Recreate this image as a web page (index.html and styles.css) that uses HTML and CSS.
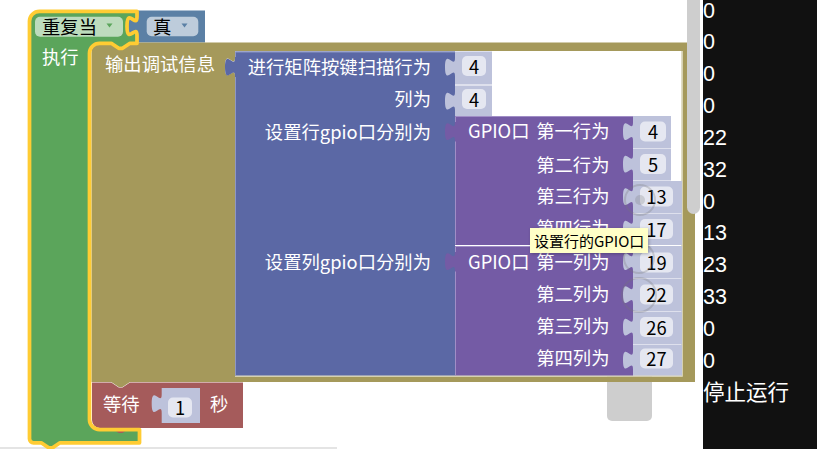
FILE: index.html
```html
<!DOCTYPE html>
<html lang="zh-CN">
<head>
<meta charset="utf-8">
<title>Blockly</title>
<link rel="stylesheet" href="styles.css">
</head>
<body>
<div class="screen">
  <div class="workspace">
    <div class="trash"></div>
    <svg class="blocks" width="703" height="449" viewBox="0 0 703 449">
      <!-- loop block (green) -->
      <path class="c-green" d="M29.5,21.3 A10,10 0 0 1 39.5,11.3 H137 V16.75 c0,12.5 -10,-10 -10,9.375 s10,-3.125 10,9.375 V43.3 H130 l-7.5,5 -3.75,0 -7.5,-5 H99.5 A10,10 0 0 0 89.5,53.3 V419.5 A10,10 0 0 0 99.5,429.5 H139.5 V442.8 H60 l-7.5,5 -3.75,0 -7.5,-5 H33.5 A4,4 0 0 1 29.5,438.8 Z"/>
      <rect class="dd-green" x="35" y="16.7" width="88" height="20" rx="5"/>
      <text class="lbl dark" x="42" y="26">重复当</text>
      <polygon class="arr-green" points="106.5,23.5 112.5,23.5 109.5,27.5"/>
      <text class="lbl" x="42" y="55.5">执行</text>

      <!-- boolean block -->
      <path class="c-bool" d="M137,10.5 H205 V42.5 H137 V35.5 c0,-12.5 -10,10 -10,-9.375 s10,3.125 10,-9.375 Z"/>
      <rect class="dd-bool" x="146.7" y="16.7" width="51.6" height="19.5" rx="5"/>
      <text class="lbl dark" x="153" y="26">真</text>
      <polygon class="arr-bool" points="181.5,23.5 187.5,23.5 184.5,27.5"/>

      <!-- print block (olive) with inline hole -->
      <path class="c-olive" fill-rule="evenodd" d="M91.5,52.5 A10,10 0 0 1 101.5,42.5 H111.25 l7.5,5 3.75,0 7.5,-5 H695 V382 H130 l-7.5,5 -3.75,0 -7.5,-5 H91.5 Z M235,51 H682.5 V376.5 H235 V76.25 c0,-12.5 -10,10 -10,-9.375 s10,3.125 10,-9.375 Z"/>
      <path class="hole-light" d="M235,376 H682 V51"/>
      <text class="lbl" x="105" y="63">输出调试信息</text>

      <!-- matrix keypad block (blue) -->
      <path class="c-blue" d="M235,51.5 H455 V375.5 H235 V76.5 c0,-12.5 -10,10 -10,-9.375 s10,3.125 10,-9.375 Z"/>
      <path class="hl-blue" d="M235.5,375 V77 M235.5,57 V52 H455"/>
      <text class="lbl end" x="431" y="66">进行矩阵按键扫描行为</text>
      <text class="lbl end" x="431" y="98">列为</text>
      <text class="lbl end" x="431" y="131">设置行gpio口分别为</text>
      <text class="lbl end" x="431" y="261">设置列gpio口分别为</text>

      <!-- number 4 / 4 -->
      <path class="c-num" d="M455,51.5 H492 V84.5 H455 V76.5 c0,-12.5 -10,10 -10,-9.375 s10,3.125 10,-9.375 Z"/>
      <rect class="fld" x="462" y="56" width="24" height="20" rx="5"/>
      <text class="lbl dark mid" x="474" y="65.5">4</text>
      <path class="c-num" d="M455,85.5 H492 V116 H455 V110.5 c0,-12.5 -10,10 -10,-9.375 s10,3.125 10,-9.375 Z"/>
      <rect class="fld" x="462" y="89" width="24" height="20" rx="5"/>
      <text class="lbl dark mid" x="474" y="98.5">4</text>

      <!-- GPIO row block (purple) -->
      <path class="c-purple" d="M455,116 H633 V245 H455 V141 c0,-12.5 -10,10 -10,-9.375 s10,3.125 10,-9.375 Z"/>
      <path class="hl-purple" d="M455.5,244.5 V141.5 M455.5,122 V116.5 H633"/>
      <text class="lbl" x="468" y="130">GPIO口</text>
      <text class="lbl end" x="609.5" y="130">第一行为</text>
      <text class="lbl end" x="609.5" y="164">第二行为</text>
      <text class="lbl end" x="609.5" y="195">第三行为</text>
      <text class="lbl end" x="609.5" y="227">第四行为</text>

      <path class="c-num" d="M633,116 H671 V148 H633 V141 c0,-12.5 -10,10 -10,-9.375 s10,3.125 10,-9.375 Z"/>
      <rect class="fld" x="640" y="121.5" width="26" height="20" rx="5"/>
      <text class="lbl dark mid" x="653" y="131">4</text>
      <path class="c-num" d="M633,148.5 H671 V180.5 H633 V173.5 c0,-12.5 -10,10 -10,-9.375 s10,3.125 10,-9.375 Z"/>
      <rect class="fld" x="640" y="154" width="26" height="20" rx="5"/>
      <text class="lbl dark mid" x="653" y="163.5">5</text>
      <path class="c-num" d="M633,181 H682 V213 H633 V206 c0,-12.5 -10,10 -10,-9.375 s10,3.125 10,-9.375 Z"/>
      <rect class="fld" x="640" y="186.5" width="33" height="20" rx="5"/>
      <text class="lbl dark mid" x="656.5" y="196">13</text>
      <path class="c-num" d="M633,213.5 H682 V245 H633 V238.5 c0,-12.5 -10,10 -10,-9.375 s10,3.125 10,-9.375 Z"/>
      <rect class="fld" x="640" y="219" width="33" height="20" rx="5"/>
      <text class="lbl dark mid" x="656.5" y="228.5">17</text>

      <!-- GPIO column block (purple) -->
      <path class="c-purple" d="M455,246 H633 V375.5 H455 V271 c0,-12.5 -10,10 -10,-9.375 s10,3.125 10,-9.375 Z"/>
      <path class="hl-purple" d="M455.5,375 V271.5 M455.5,252 V246.5 H633"/>
      <text class="lbl" x="468" y="260.5">GPIO口</text>
      <text class="lbl end" x="609.5" y="260.5">第一列为</text>
      <text class="lbl end" x="609.5" y="293">第二列为</text>
      <text class="lbl end" x="609.5" y="325">第三列为</text>
      <text class="lbl end" x="609.5" y="356.5">第四列为</text>

      <path class="c-num" d="M633,246 H682 V278.5 H633 V271 c0,-12.5 -10,10 -10,-9.375 s10,3.125 10,-9.375 Z"/>
      <rect class="fld" x="640" y="252.5" width="33" height="20" rx="5"/>
      <text class="lbl dark mid" x="656.5" y="262">19</text>
      <path class="c-num" d="M633,279 H682 V311 H633 V304 c0,-12.5 -10,10 -10,-9.375 s10,3.125 10,-9.375 Z"/>
      <rect class="fld" x="640" y="284.5" width="33" height="20" rx="5"/>
      <text class="lbl dark mid" x="656.5" y="294">22</text>
      <path class="c-num" d="M633,311.5 H682 V344 H633 V336.5 c0,-12.5 -10,10 -10,-9.375 s10,3.125 10,-9.375 Z"/>
      <rect class="fld" x="640" y="317" width="33" height="20" rx="5"/>
      <text class="lbl dark mid" x="656.5" y="326.5">26</text>
      <path class="c-num" d="M633,344.5 H682 V375.5 H633 V369.5 c0,-12.5 -10,10 -10,-9.375 s10,3.125 10,-9.375 Z"/>
      <rect class="fld" x="640" y="348.5" width="33" height="20" rx="5"/>
      <text class="lbl dark mid" x="656.5" y="358">27</text>

      <!-- wait block (red) -->
      <path class="c-red" d="M92,382.5 H111.25 l7.5,5 3.75,0 7.5,-5 H243 V428 H130 l-7.5,5 -3.75,0 -7.5,-5 H100 A8,8 0 0 1 92,420 Z"/>
      <text class="lbl" x="103" y="402.5">等待</text>
      <path class="c-num" d="M161.7,388 H200 V423 H161.7 V413 c0,-12.5 -10,10 -10,-9.375 s10,3.125 10,-9.375 Z"/>
      <rect class="fld" x="168" y="397.5" width="24" height="20" rx="5"/>
      <text class="lbl dark mid" x="180" y="407">1</text>
      <text class="lbl" x="210" y="402.5">秒</text>

      <!-- selection outline of the loop block -->
      <path class="sel" d="M29.5,21.3 A10,10 0 0 1 39.5,11.3 H137 V16.75 c0,12.5 -10,-10 -10,9.375 s10,-3.125 10,9.375 V43.3 H130 l-7.5,5 -3.75,0 -7.5,-5 H99.5 A10,10 0 0 0 89.5,53.3 V419.5 A10,10 0 0 0 99.5,429.5 H139.5 V442.8 H60 l-7.5,5 -3.75,0 -7.5,-5 H33.5 A4,4 0 0 1 29.5,438.8 Z"/>

      <!-- touch feedback rings -->
      <circle class="ring" cx="640" cy="200" r="15"/>
      <circle class="dot" cx="640" cy="200" r="5"/>
      <circle class="ring" cx="639" cy="258" r="15"/>
      <circle class="ring" cx="639" cy="295" r="17"/>
    </svg>
    <div class="tooltip">设置行的GPIO口</div>
    <div class="scrollbar"></div>
    <div class="hbar"></div>
  </div>
  <div class="console">
    <div class="log">
      <div>0</div>
      <div>0</div>
      <div>0</div>
      <div>0</div>
      <div>22</div>
      <div>32</div>
      <div>0</div>
      <div>13</div>
      <div>23</div>
      <div>33</div>
      <div>0</div>
      <div>0</div>
      <div>停止运行</div>
    </div>
  </div>
</div>
</body>
</html>
```
FILE: styles.css
```css
html, body {
  margin: 0;
  padding: 0;
  background: #fff;
  overflow: hidden;
}

.screen {
  display: flex;
  width: 817px;
  height: 449px;
}

.workspace {
  position: relative;
  width: 703px;
  height: 449px;
  background: #fff;
  overflow: hidden;
  flex: 0 0 703px;
}

.blocks {
  display: block;
  position: relative;
  z-index: 1;
}

.c-green { fill: #5ba55b; }
.c-bool { fill: #5b80a5; }
.c-olive { fill: #a5995b; }
.c-blue { fill: #5b68a5; }
.c-purple { fill: #745ba5; }
.c-red { fill: #a55b5b; }
.c-num { fill: #bdc2db; }
.fld { fill: #e5e7f1; }
.dd-green { fill: #bddbbd; }
.dd-bool { fill: #bdccdb; }
.arr-green { fill: #5ba55b; }
.arr-bool { fill: #5b80a5; }

.hole-light {
  fill: none;
  stroke: #d8d2b2;
  stroke-width: 1.5;
}

.hl-blue {
  fill: none;
  stroke: #8e97c6;
  stroke-width: 1;
}

.hl-purple {
  fill: none;
  stroke: #a08ec6;
  stroke-width: 1;
}

.sel {
  fill: none;
  stroke: #ffcc33;
  stroke-width: 3.75;
  stroke-linejoin: round;
}

.ring {
  fill: none;
  stroke: rgba(120, 120, 120, 0.28);
  stroke-width: 2;
}

.dot {
  fill: rgba(120, 120, 120, 0.25);
}

.lbl {
  font-family: "Noto Sans CJK SC", sans-serif;
  font-size: 18.33px;
  fill: #fff;
  dominant-baseline: central;
}

.lbl.dark { fill: #000; }
.lbl.end { text-anchor: end; }
.lbl.mid { text-anchor: middle; }

.trash {
  position: absolute;
  left: 607px;
  top: 376px;
  width: 45px;
  height: 45px;
  background: #cecece;
  border-radius: 0 0 5px 5px;
}

.scrollbar {
  position: absolute;
  z-index: 2;
  left: 687px;
  top: -10px;
  width: 13px;
  height: 224px;
  background: #cecece;
  border-radius: 6.5px;
}

.hbar {
  position: absolute;
  left: 0;
  bottom: 0;
  width: 337px;
  height: 2px;
  background: #e4e4e4;
}

.tooltip {
  position: absolute;
  z-index: 3;
  left: 530px;
  top: 228px;
  width: 118px;
  height: 25px;
  box-sizing: border-box;
  padding-left: 4px;
  background: #ffffc7;
  box-shadow: 1px 1px 3px rgba(0, 0, 0, 0.25);
  font-family: "Noto Sans CJK SC", sans-serif;
  font-size: 15px;
  line-height: 25px;
  color: #000;
  white-space: nowrap;
}

.console {
  flex: 1;
  background: #111111;
  color: #fff;
  font-family: "Liberation Sans", "Noto Sans CJK SC", sans-serif;
  font-size: 21.5px;
  line-height: 31.85px;
  overflow: hidden;
}

.log {
  margin-top: -4.5px;
}
```
